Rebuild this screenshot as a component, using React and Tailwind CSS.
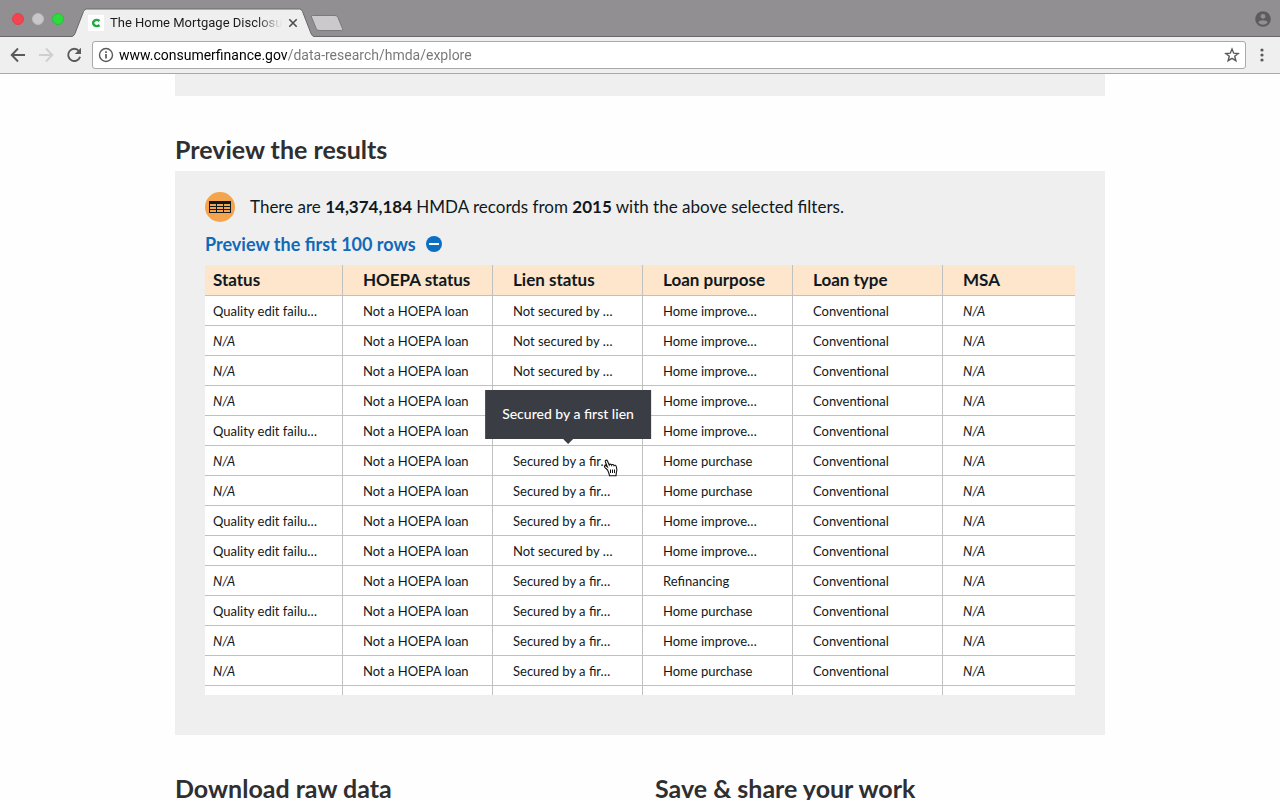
import React from "react";

const columns = ["Status", "HOEPA status", "Lien status", "Loan purpose", "Loan type", "MSA"];

const QUALITY = "Quality edit failu…";
const UNSECURED = "Not secured by …";
const SECURED = "Secured by a fir…";
const IMPROVE = "Home improve…";
const PURCHASE = "Home purchase";

const rows = [
  [QUALITY, UNSECURED, IMPROVE],
  ["N/A", UNSECURED, IMPROVE],
  ["N/A", UNSECURED, IMPROVE],
  ["N/A", UNSECURED, IMPROVE],
  [QUALITY, UNSECURED, IMPROVE],
  ["N/A", SECURED, PURCHASE, "Secured by a first lien"],
  ["N/A", SECURED, PURCHASE],
  [QUALITY, SECURED, IMPROVE],
  [QUALITY, UNSECURED, IMPROVE],
  ["N/A", SECURED, "Refinancing"],
  [QUALITY, SECURED, PURCHASE],
  ["N/A", SECURED, IMPROVE],
  ["N/A", SECURED, PURCHASE],
  ["", "", ""],
];

function TabStrip() {
  return (
    <div className="flex h-[37px] shrink-0 items-stretch bg-[#918f91] shadow-[inset_0_-1px_0_#69686a]">
      <div className="flex items-center gap-2 pl-3">
        <button aria-label="Close window" className="size-3 rounded-full border border-[#e0434b] bg-[#f4444f]" />
        <button aria-label="Minimize window" className="size-3 rounded-full border border-[#bdbbbd] bg-[#c9c7c9]" />
        <button aria-label="Zoom window" className="size-3 rounded-full border border-[#27c136] bg-[#2ddb3f]" />
      </div>
      <div className="relative ml-2 flex w-[242px] items-center pl-4 pt-2">
        <svg className="absolute inset-0 size-full" viewBox="0 0 242 37" preserveAspectRatio="none" aria-hidden="true">
          <path d="M0 37 L0 36.500 Q2 36 3 33.500 L11.500 11.500 Q12.500 9 14.500 9 L227.500 9 Q229.500 9 230.500 11.500 L239 33.500 Q240 36 242 36.500 L242 37 Z" fill="#f0eff0" />
          <path d="M0 36.500 Q2 36 3 33.500 L11.500 11.500 Q12.500 9 14.500 9 L227.500 9 Q229.500 9 230.500 11.500 L239 33.500 Q240 36 242 36.500" fill="none" stroke="#69686a" />
        </svg>
        <svg className="relative size-4 shrink-0 bg-white" viewBox="0 0 16 16" aria-hidden="true">
          <path d="M11.500 6 A3.600 3.100 0 1 0 11.500 10" fill="none" stroke="#20aa3f" strokeWidth="2.500" />
        </svg>
        <span className="relative ml-1.5 w-[172px] overflow-hidden whitespace-nowrap bg-linear-to-r from-[#1b1b1b] from-85% to-transparent bg-clip-text font-[Roboto,sans-serif] text-[13px] leading-4 text-transparent">
          The Home Mortgage Disclosure Act
        </span>
        <button aria-label="Close tab" className="relative ml-[5px]">
          <svg className="size-3" viewBox="0 0 12 12" aria-hidden="true">
            <path d="M2.300 2.300 L9.700 9.700 M9.700 2.300 L2.300 9.700" stroke="#4c4c4c" strokeWidth="1.600" />
          </svg>
        </button>
      </div>
      <button aria-label="New tab" className="-ml-1 mt-2 self-center">
        <svg className="h-4 w-[34px]" viewBox="0 0 34 16" aria-hidden="true">
          <path d="M2.500 .500 H25 Q27 .500 27.800 2.300 L32.500 13.500 Q33 15.500 31.500 15.500 H9 Q7 15.500 6.200 13.500 L1.500 2 Q1 .500 2.500 .500 Z" fill="#cbc9cb" stroke="#7b797b" />
        </svg>
      </button>
      <button aria-label="Profile" className="ml-auto mr-[9px]">
        <svg className="size-4" viewBox="0 0 16 16" aria-hidden="true">
          <circle cx="8" cy="8" r="7.800" fill="#5d5b5d" />
          <circle cx="8" cy="5.300" r="2.400" fill="#918f91" />
          <path d="M3.300 11.400 C3.900 8.600 12.100 8.600 12.700 11.400 A6 6 0 0 1 3.300 11.400 Z" fill="#918f91" />
        </svg>
      </button>
    </div>
  );
}

function Toolbar() {
  return (
    <div className="flex h-[37px] shrink-0 items-center border-b border-[#a9a9a9] bg-[#f0eff0] pl-[10px] pr-[10px]">
      <button aria-label="Back" className="mr-3">
        <svg className="size-4" viewBox="0 0 16 16" fill="none" stroke="#5a5a5a" strokeWidth="1.900" aria-hidden="true">
          <path d="M15 8 H2 M8 1.500 L1.700 8 L8 14.500" />
        </svg>
      </button>
      <button aria-label="Forward" className="mr-3" disabled>
        <svg className="size-4" viewBox="0 0 16 16" fill="none" stroke="#d0cfd0" strokeWidth="1.900" aria-hidden="true">
          <path d="M1 8 H14 M8 1.500 L14.300 8 L8 14.500" />
        </svg>
      </button>
      <button aria-label="Reload" className="mr-[10px]">
        <svg className="size-4" viewBox="0 0 16 16" fill="none" aria-hidden="true">
          <path d="M13 4 A6.100 6.100 0 1 0 14.100 9.800" stroke="#5a5a5a" strokeWidth="1.900" />
          <path d="M15 .800 V7 H8.800 Z" fill="#5a5a5a" />
        </svg>
      </button>
      <div className="flex h-7 min-w-0 flex-1 items-center rounded-[3px] border border-[#a9a9a9] bg-white px-[5px]">
        <svg className="size-4 shrink-0" viewBox="0 0 16 16" fill="none" aria-hidden="true">
          <circle cx="8" cy="8" r="6.500" stroke="#5a5a5a" strokeWidth="1.400" />
          <path d="M8 7 V11.600 M8 4.200 V5.900" stroke="#5a5a5a" strokeWidth="1.700" />
        </svg>
        <input
          aria-label="Address"
          defaultValue="www.consumerfinance.gov/data-research/hmda/explore"
          className="ml-[5px] min-w-0 flex-1 bg-linear-to-r from-black from-[169px] to-[#757575] to-[169px] bg-clip-text font-[Roboto,sans-serif] text-[14px] leading-5 text-transparent outline-none"
        />
        <button aria-label="Bookmark this page" className="shrink-0">
          <svg className="size-4" viewBox="0 0 16 16" fill="none" aria-hidden="true">
            <path d="M8 2 L9.700 6.200 L14.200 6.500 L10.700 9.300 L11.900 13.700 L8 11.300 L4.100 13.700 L5.300 9.300 L1.800 6.500 L6.300 6.200 Z" stroke="#5a5a5a" strokeWidth="1.400" />
          </svg>
        </button>
      </div>
      <button aria-label="Menu" className="ml-2">
        <svg className="h-4 w-4" viewBox="0 0 16 16" fill="#5a5a5a" aria-hidden="true">
          <circle cx="8" cy="3" r="1.600" />
          <circle cx="8" cy="8" r="1.600" />
          <circle cx="8" cy="13" r="1.600" />
        </svg>
      </button>
    </div>
  );
}

function HandCursor() {
  return (
    <svg className="absolute left-[90px] top-2 z-20 h-[18px] w-4" viewBox="0 0 16 18" aria-hidden="true">
      <path
        d="M4.600 11 L2 8.600 C.600 7.200 2 6 3.300 7 L4.300 7.800 L2.300 2.800 C1.800 1 3.800 .500 4.500 2 L6.200 6 C6.500 4.800 8.200 4.800 8.600 6.200 C9.200 5 10.700 5.300 11 6.600 C11.800 5.800 13 6.300 13.300 7.600 C14 10 14.600 11.500 13.300 14 L13 16.800 H6.500 C6.300 15 5.600 13.500 4.600 11 Z"
        fill="#fff"
        stroke="#111"
        strokeWidth="1.100"
      />
      <path d="M7.500 10.500 V14 M9.500 10.500 V14 M11.500 10.500 V14" stroke="#111" />
    </svg>
  );
}

function LienCell({ text, tip }) {
  if (!tip) return text;
  return (
    <span className="relative block w-[110px]">
      <a href="#lien" aria-describedby="lien-tip">{text}</a>
      <span
        id="lien-tip"
        role="tooltip"
        className="absolute bottom-full left-1/2 z-10 mb-3 flex h-[49px] -translate-x-1/2 items-center bg-[#3a3d44] px-[17px] text-sm font-medium whitespace-nowrap text-white"
      >
        {tip}
        <svg className="absolute left-1/2 top-full h-[5px] w-[10px] -translate-x-1/2" viewBox="0 0 10 5" aria-hidden="true">
          <path d="M0 0 H10 L5 5 Z" fill="#3a3d44" />
        </svg>
      </span>
      <HandCursor />
    </span>
  );
}

function ResultsTable() {
  const cell = "border-b border-[#bfc0c2] pl-5 whitespace-nowrap not-last:border-r first:pl-2";
  return (
    <div className="h-[430px] overflow-hidden">
      <table className="w-full table-fixed border-separate border-spacing-0 bg-white text-left text-[#101820]">
        <colgroup>
          <col className="w-[138px]" />
          <col className="w-[150px]" />
          <col className="w-[150px]" />
          <col className="w-[150px]" />
          <col className="w-[150px]" />
          <col />
        </colgroup>
        <thead>
          <tr className="h-[31px] bg-[#fde6cb]">
            {columns.map((name) => (
              <th key={name} scope="col" className={cell + " text-[17px] leading-6 font-bold"}>{name}</th>
            ))}
          </tr>
        </thead>
        <tbody>
          {rows.map(([status, lien, purpose, tip], i) => (
            <tr key={i} className="h-[30px] text-[13px] leading-5">
              <td className={cell}>{status === "N/A" ? <em>N/A</em> : status}</td>
              <td className={cell}>{lien && "Not a HOEPA loan"}</td>
              <td className={cell}><LienCell text={lien} tip={tip} /></td>
              <td className={cell}>{purpose}</td>
              <td className={cell}>{lien && "Conventional"}</td>
              <td className={cell}>{lien && <em>N/A</em>}</td>
            </tr>
          ))}
        </tbody>
      </table>
    </div>
  );
}

export default function App() {
  return (
    <div className="flex h-screen flex-col overflow-hidden bg-[#fefefe] font-[Lato,sans-serif]">
      <TabStrip />
      <Toolbar />
      <main className="min-h-0 flex-1 overflow-hidden">
        <div className="mx-auto max-w-[930px]">
          <div className="h-[22px] bg-[#efeff0]" />
          <section className="mt-[38px]">
            <h2 className="mb-[7px] text-[25px] leading-[30px] font-bold text-[#2f2f31]">Preview the results</h2>
            <div className="bg-[#efeff0] px-[30px] pt-[21px] pb-10">
              <div className="flex items-center gap-[15px]">
                <svg className="size-[30px]" viewBox="0 0 30 30" aria-hidden="true">
                  <circle cx="15" cy="15" r="15" fill="#f3a44c" />
                  <path d="M4 9 H26 V21 H4 Z M5 12 V14 H11 V12 Z M12 12 V14 H18 V12 Z M19 12 V14 H25 V12 Z M5 15 V17 H11 V15 Z M12 15 V17 H18 V15 Z M19 15 V17 H25 V15 Z M5 18 V20 H11 V18 Z M12 18 V20 H18 V18 Z M19 18 V20 H25 V18 Z" fill="#101820" fillRule="evenodd" />
                </svg>
                <p className="text-[17px] leading-6 text-[#101820]">
                  There are <strong>14,374,184</strong> HMDA records from <strong>2015</strong> with the above selected filters.
                </p>
              </div>
              <button className="mt-[9px] mb-2 flex items-center gap-[10px] text-lg leading-[26px] font-bold text-[#1169b8]">
                Preview the first 100 rows
                <svg className="size-4" viewBox="0 0 16 16" aria-hidden="true">
                  <circle cx="8" cy="8" r="8" fill="#0b6fc4" />
                  <rect x="3" y="7" width="10" height="2" fill="#fff" />
                </svg>
              </button>
              <ResultsTable />
            </div>
          </section>
          <div className="mt-[38px] grid grid-cols-2 gap-[30px] text-[25px] leading-[30px] font-bold text-[#2f2f31]">
            <h2>Download raw data</h2>
            <h2>Save &amp; share your work</h2>
          </div>
        </div>
      </main>
    </div>
  );
}
